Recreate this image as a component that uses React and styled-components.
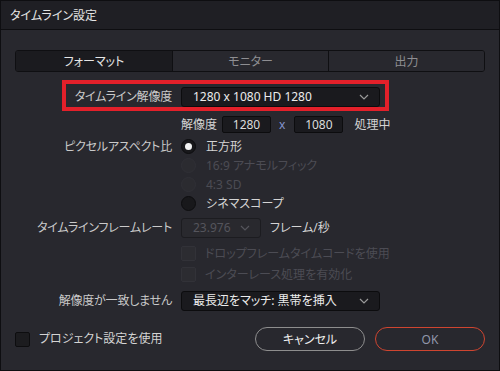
import styled, { createGlobalStyle } from "styled-components";

const Global = createGlobalStyle`
  * { box-sizing: border-box; }
  body {
    margin: 0;
    background: #28282e;
    font-family: "Noto Sans", "Noto Sans CJK JP", sans-serif;
    font-feature-settings: "palt";
  }
`;

function Chevron({ color = "#9a9a9a" }) {
  return (
    <svg width="10" height="6" viewBox="0 0 10 6">
      <polyline points="1,1 5,5 9,1" fill="none" stroke={color} strokeWidth="1.2" />
    </svg>
  );
}

export default function App() {
  return (
    <Window>
      <Global />
      <TitleBar>タイムライン設定</TitleBar>
      <Body>
        <Tabs>
          <Tab $active>フォーマット</Tab>
          <Tab>モニター</Tab>
          <Tab>出力</Tab>
        </Tabs>

        <Highlight $top={15}>
          <Label>タイムライン解像度</Label>
          <Select $width={199}>
            <span>1280 x 1080 HD 1280</span>
            <Chevron />
          </Select>
        </Highlight>

        <Row $top={9}>
          <span />
          <Inline>
            <Text>解像度</Text>
            <NumBox>1280</NumBox>
            <Times>x</Times>
            <NumBox>1080</NumBox>
            <Text $pad={11}>処理中</Text>
          </Inline>
        </Row>

        <Row $top={4} $align="start">
          <Label $h={19}>ピクセルアスペクト比</Label>
          <RadioList>
            <RadioItem>
              <Radio $checked />
              <Text>正方形</Text>
            </RadioItem>
            <RadioItem>
              <Radio $disabled />
              <Text $disabled>16:9 アナモルフィック</Text>
            </RadioItem>
            <RadioItem>
              <Radio $disabled />
              <Text $disabled>4:3 SD</Text>
            </RadioItem>
            <RadioItem>
              <Radio />
              <Text>シネマスコープ</Text>
            </RadioItem>
          </RadioList>
        </Row>

        <Row $top={5}>
          <Label>タイムラインフレームレート</Label>
          <Inline>
            <Select $width={80} $disabled>
              <span>23.976</span>
              <Chevron color="#55555c" />
            </Select>
            <Text $pad={9}>フレーム/秒</Text>
          </Inline>
        </Row>

        <Row $top={8}>
          <span />
          <CheckItem>
            <Check $disabled />
            <Text $disabled>ドロップフレームタイムコードを使用</Text>
          </CheckItem>
        </Row>

        <Row $top={6}>
          <span />
          <CheckItem>
            <Check $disabled />
            <Text $disabled>インターレース処理を有効化</Text>
          </CheckItem>
        </Row>

        <Row $top={9}>
          <Label>解像度が一致しません</Label>
          <Select $width={199}>
            <span>最長辺をマッチ: 黒帯を挿入</span>
            <Chevron />
          </Select>
        </Row>

        <Footer>
          <CheckItem>
            <Check />
            <Text>プロジェクト設定を使用</Text>
          </CheckItem>
          <Buttons>
            <Button>キャンセル</Button>
            <Button $primary>OK</Button>
          </Buttons>
        </Footer>
      </Body>
    </Window>
  );
}

const Window = styled.div`
  width: 500px;
  height: 371px;
  border: 1px solid #0e0e11;
  background: #28282e;
  display: flex;
  flex-direction: column;
`;

const TitleBar = styled.div`
  height: 29px;
  flex-shrink: 0;
  background: #1f1f24;
  border-bottom: 1px solid #0e0e11;
  color: #e4e4e4;
  font-size: 12px;
  display: flex;
  align-items: center;
  padding-left: 9px;
`;

const Body = styled.div`
  flex: 1;
  padding: 20px 14px 0 14px;
  display: flex;
  flex-direction: column;
`;

const Tabs = styled.div`
  height: 22px;
  flex-shrink: 0;
  display: grid;
  grid-template-columns: 1fr 1fr 1fr;
  border: 1px solid #0f0f12;
  border-radius: 3px;
  overflow: hidden;
`;

const Tab = styled.div`
  display: flex;
  align-items: center;
  justify-content: center;
  font-size: 12px;
  color: ${(p) => (p.$active ? "#e6e6e6" : "#8e8e92")};
  background: ${(p) => (p.$active ? "#1b1b1f" : "#28282e")};
  & + & {
    border-left: 1px solid #0f0f12;
  }
`;

const Row = styled.div`
  display: grid;
  grid-template-columns: 157px 1fr;
  column-gap: 9px;
  align-items: ${(p) => p.$align || "center"};
  margin-top: ${(p) => p.$top}px;
  line-height: 1;
`;

const Highlight = styled(Row)`
  position: relative;
  &::after {
    content: "";
    position: absolute;
    left: 47px;
    right: 96px;
    top: -7px;
    bottom: -4px;
    border: 4px solid #e3202a;
    pointer-events: none;
  }
`;

const Label = styled.div`
  text-align: right;
  font-size: 12px;
  color: #cacaca;
  letter-spacing: -0.2px;
  white-space: nowrap;
  line-height: ${(p) => (p.$h ? `${p.$h}px` : 1)};
`;

const Text = styled.span`
  font-size: 12px;
  line-height: 1;
  color: ${(p) => (p.$disabled ? "#4c4c54" : "#d4d4d4")};
  padding-left: ${(p) => p.$pad || 0}px;
  white-space: nowrap;
`;

const Select = styled.div`
  width: ${(p) => p.$width}px;
  height: 20px;
  background: ${(p) => (p.$disabled ? "#29292e" : "#1a1a1e")};
  border: 1px solid ${(p) => (p.$disabled ? "#1c1c20" : "#0c0c0e")};
  border-radius: 3px;
  display: flex;
  align-items: center;
  justify-content: space-between;
  padding: 0 10px 0 11px;
  font-size: 12px;
  color: ${(p) => (p.$disabled ? "#55555c" : "#ececec")};
  white-space: nowrap;
`;

const Inline = styled.div`
  display: flex;
  align-items: center;
`;

const NumBox = styled.div`
  width: 49px;
  height: 17px;
  margin-left: 4px;
  background: #1a1a1e;
  border: 1px solid #0c0c0e;
  border-radius: 2px;
  display: flex;
  align-items: center;
  justify-content: center;
  font-size: 12px;
  color: #dcdcdc;
  &:first-of-type {
    margin-left: 5px;
  }
`;

const Times = styled.span`
  font-size: 12px;
  color: #8494cc;
  padding: 0 5px 0 8px;
`;

const RadioList = styled.div`
  display: flex;
  flex-direction: column;
`;

const RadioItem = styled.div`
  height: 19px;
  display: flex;
  align-items: center;
  gap: 10px;
`;

const Radio = styled.span`
  width: 15px;
  height: 15px;
  border-radius: 50%;
  flex-shrink: 0;
  background: ${(p) => (p.$disabled ? "#2b2b30" : "#18181b")};
  border: 1px solid ${(p) => (p.$disabled ? "#303036" : "#0d0d0f")};
  display: flex;
  align-items: center;
  justify-content: center;
  &::after {
    content: "";
    width: 7px;
    height: 7px;
    border-radius: 50%;
    background: #f2f2f2;
    display: ${(p) => (p.$checked ? "block" : "none")};
  }
`;

const CheckItem = styled.div`
  display: flex;
  align-items: center;
  gap: 9px;
`;

const Check = styled.span`
  width: 15px;
  height: 15px;
  flex-shrink: 0;
  border-radius: 2px;
  background: ${(p) => (p.$disabled ? "#2c2c31" : "#1c1c1f")};
  border: 1px solid ${(p) => (p.$disabled ? "#323238" : "#0d0d0f")};
`;

const Footer = styled.div`
  margin-top: 16px;
  display: flex;
  align-items: center;
  justify-content: space-between;
`;

const Buttons = styled.div`
  display: flex;
  gap: 10px;
`;

const Button = styled.button`
  width: 110px;
  height: 24px;
  border-radius: 12px;
  background: transparent;
  border: 1px solid ${(p) => (p.$primary ? "#cf4530" : "#8e8e8e")};
  color: ${(p) => (p.$primary ? "#9097aa" : "#f0f0f0")};
  font-family: inherit;
  font-size: 12px;
  font-feature-settings: "palt";
  padding: 0;
`;
